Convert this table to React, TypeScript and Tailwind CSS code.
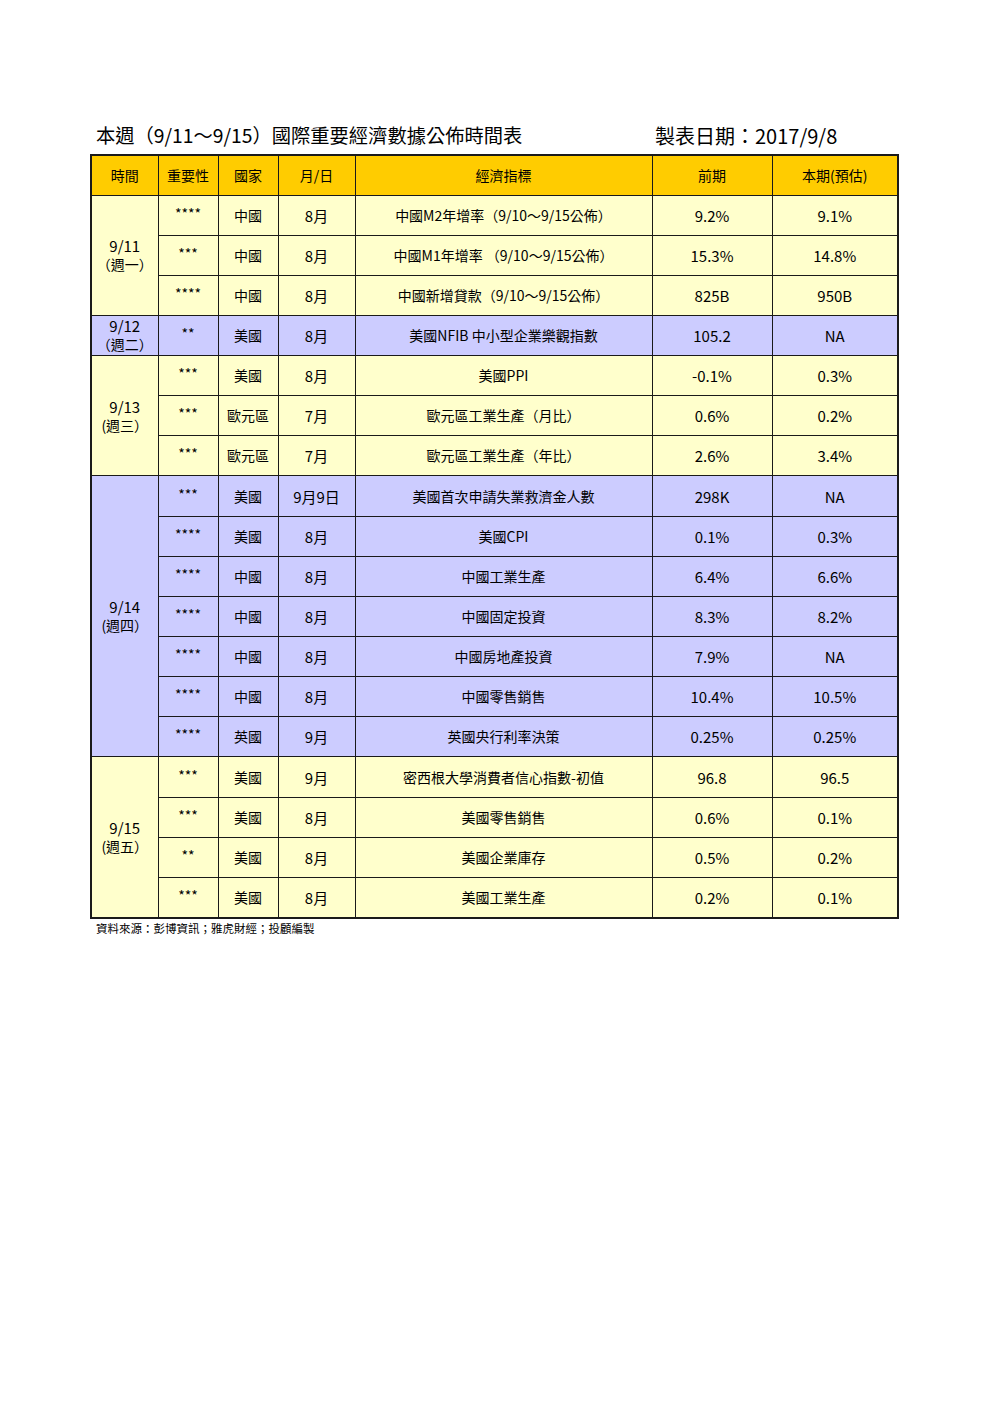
const YELLOW = "bg-[#ffffcc]";
const LAVENDER = "bg-[#ccccff]";

type Row = { stars: string; country: string; month: string; name: string; prev: string; est: string };
type Group = { date: string; day: string; bg: string; rows: Row[] };

const GROUPS: Group[] = [
  {
    date: "9/11",
    day: "（週一）",
    bg: YELLOW,
    rows: [
      { stars: "****", country: "中國", month: "8月", name: "中國M2年增率（9/10～9/15公佈）", prev: "9.2%", est: "9.1%" },
      { stars: "***", country: "中國", month: "8月", name: "中國M1年增率 （9/10～9/15公佈）", prev: "15.3%", est: "14.8%" },
      { stars: "****", country: "中國", month: "8月", name: "中國新增貸款（9/10～9/15公佈）", prev: "825B", est: "950B" },
    ],
  },
  {
    date: "9/12",
    day: "（週二）",
    bg: LAVENDER,
    rows: [{ stars: "**", country: "美國", month: "8月", name: "美國NFIB 中小型企業樂觀指數", prev: "105.2", est: "NA" }],
  },
  {
    date: "9/13",
    day: "(週三）",
    bg: YELLOW,
    rows: [
      { stars: "***", country: "美國", month: "8月", name: "美國PPI", prev: "-0.1%", est: "0.3%" },
      { stars: "***", country: "歐元區", month: "7月", name: "歐元區工業生產（月比）", prev: "0.6%", est: "0.2%" },
      { stars: "***", country: "歐元區", month: "7月", name: "歐元區工業生產（年比）", prev: "2.6%", est: "3.4%" },
    ],
  },
  {
    date: "9/14",
    day: "(週四）",
    bg: LAVENDER,
    rows: [
      { stars: "***", country: "美國", month: "9月9日", name: "美國首次申請失業救濟金人數", prev: "298K", est: "NA" },
      { stars: "****", country: "美國", month: "8月", name: "美國CPI", prev: "0.1%", est: "0.3%" },
      { stars: "****", country: "中國", month: "8月", name: "中國工業生產", prev: "6.4%", est: "6.6%" },
      { stars: "****", country: "中國", month: "8月", name: "中國固定投資", prev: "8.3%", est: "8.2%" },
      { stars: "****", country: "中國", month: "8月", name: "中國房地產投資", prev: "7.9%", est: "NA" },
      { stars: "****", country: "中國", month: "8月", name: "中國零售銷售", prev: "10.4%", est: "10.5%" },
      { stars: "****", country: "英國", month: "9月", name: "英國央行利率決策", prev: "0.25%", est: "0.25%" },
    ],
  },
  {
    date: "9/15",
    day: "(週五）",
    bg: YELLOW,
    rows: [
      { stars: "***", country: "美國", month: "9月", name: "密西根大學消費者信心指數-初值", prev: "96.8", est: "96.5" },
      { stars: "***", country: "美國", month: "8月", name: "美國零售銷售", prev: "0.6%", est: "0.1%" },
      { stars: "**", country: "美國", month: "8月", name: "美國企業庫存", prev: "0.5%", est: "0.2%" },
      { stars: "***", country: "美國", month: "8月", name: "美國工業生產", prev: "0.2%", est: "0.1%" },
    ],
  },
];

const HEADERS = ["時間", "重要性", "國家", "月/日", "經濟指標", "前期", "本期(預估)"];
const WIDTHS = ["w-[67px]", "w-[60px]", "w-[60px]", "w-[77px]", "w-[297px]", "w-[120px]", "w-[126px]"];

const cell = "border-[1.5px] border-[#1a1a1a] text-center align-middle p-0";

export default function App() {
  return (
    <div
      className="w-[992px] h-[1403px] bg-white text-black"
      style={{ fontFamily: '"Noto Sans CJK TC", "Noto Sans", sans-serif' }}
    >
      <div className="pt-[122px] pl-[90px] w-[897px] box-content">
        <div className="flex items-center h-[28px] text-[20px] leading-none">
          <div className="pl-[6px] w-[565px] text-[19.3px]">本週（9/11～9/15）國際重要經濟數據公佈時間表</div>
          <div>製表日期：2017/9/8</div>
        </div>
        <table className="mt-[4px] border-collapse border-2 border-[#1a1a1a] table-fixed w-[807px] text-[14px] leading-[17px]">
          <colgroup>
            {WIDTHS.map((w, i) => (
              <col key={i} className={w} />
            ))}
          </colgroup>
          <thead>
            <tr className="bg-[#ffcc00] h-[40px]">
              {HEADERS.map((h) => (
                <th key={h} className={`${cell} font-normal`}>
                  {h}
                </th>
              ))}
            </tr>
          </thead>
          <tbody>
            {GROUPS.map((g) =>
              g.rows.map((r, i) => (
                <tr key={g.date + i} className={`${g.bg} h-[40.15px]`}>
                  {i === 0 && (
                    <td rowSpan={g.rows.length} className={`${cell} leading-[19px] text-[15px]`}>
                      <div>{g.date}</div>
                      <div className="text-[14px]">{g.day}</div>
                    </td>
                  )}
                  <td className={`${cell} pb-[4px]`}>{r.stars}</td>
                  <td className={cell}>{r.country}</td>
                  <td className={`${cell} text-[15px]`}>{r.month}</td>
                  <td className={cell}>{r.name}</td>
                  <td className={`${cell} text-[15px]`}>{r.prev}</td>
                  <td className={`${cell} text-[15px]`}>{r.est}</td>
                </tr>
              ))
            )}
          </tbody>
        </table>
        <div className="pl-[6px] pt-[2px] text-[11.5px] leading-[14px]">資料來源：彭博資訊；雅虎財經；投顧編製</div>
      </div>
    </div>
  );
}
